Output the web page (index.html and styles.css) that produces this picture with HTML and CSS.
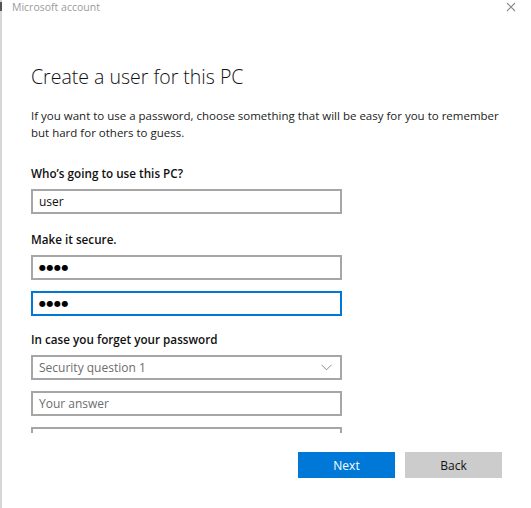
FILE: index.html
```html
<!DOCTYPE html>
<html>
<head>
<meta charset="utf-8">
<link rel="stylesheet" href="styles.css">
</head>
<body>
<div class="window">
  <div class="titlebar">
    <span class="app-name">Microsoft account</span>
    <svg class="close" width="10" height="10" viewBox="0 0 10 10"><path d="M1 1 L9 9 M9 1 L1 9" stroke="#8a8a8a" stroke-width="1.1" fill="none"/></svg>
  </div>
  <div class="content">
    <h1 class="title">Create a user for this PC</h1>
    <p class="intro">If you want to use a password, choose something that will be easy for you to remember<br>but hard for others to guess.</p>
    <div class="label first">Who’s going to use this PC?</div>
    <div class="field"><span class="value">user</span></div>
    <div class="label">Make it secure.</div>
    <div class="field"><span class="dots">●●●●</span></div>
    <div class="field focused"><span class="dots">●●●●</span></div>
    <div class="label security">In case you forget your password</div>
    <div class="field select"><span class="placeholder">Security question 1</span>
      <svg class="chevron" width="11" height="7" viewBox="0 0 11 7"><path d="M0.5 0.8 L5.5 5.8 L10.5 0.8" stroke="#8c8c8c" stroke-width="1" fill="none"/></svg>
    </div>
    <div class="field"><span class="placeholder">Your answer</span></div>
    <div class="field select"></div>
  </div>
  <div class="footer">
    <button class="btn primary">Next</button>
    <button class="btn secondary">Back</button>
  </div>
</div>
</body>
</html>
```
FILE: styles.css
```css
* { box-sizing: border-box; }
html, body {
  margin: 0;
  padding: 0;
  background: #fff;
}
body {
  width: 531px;
  height: 508px;
  overflow: hidden;
  font-family: "Open Sans", "Noto Sans", sans-serif;
  color: #1a1a1a;
}
.window {
  position: relative;
  width: 531px;
  height: 508px;
  border-left: 2px solid #d6d6d6;
  display: flex;
  flex-direction: column;
}
.window::before {
  content: "";
  position: absolute;
  left: -2px;
  top: 2px;
  width: 2px;
  height: 9px;
  background: #555;
}
.titlebar {
  height: 30px;
  flex: none;
  display: flex;
  justify-content: space-between;
  align-items: flex-start;
  padding: 0 15px 0 10px;
}
.app-name {
  font-size: 10.5px;
  line-height: 14px;
  color: #9b9b9b;
}
.close {
  margin-top: 2px;
}
.content {
  height: 403px;
  flex: none;
  overflow: hidden;
  padding: 33px 0 0 29px;
}
.title {
  margin: 0;
  font-size: 19.5px;
  font-weight: 300;
  line-height: 28px;
  color: #111;
}
.intro {
  margin: 16px 0 0;
  font-size: 11.5px;
  line-height: 17px;
  color: #222;
  white-space: nowrap;
}
.label {
  margin: 17px 0 8px;
  font-size: 11.7px;
  font-weight: 600;
  line-height: 16px;
  color: #111;
}
.label.first {
  margin-top: 24px;
}
.label.security {
  margin-top: 15px;
}
.field {
  width: 311px;
  height: 25px;
  border: 2px solid #a6a6a6;
  display: flex;
  align-items: center;
  justify-content: space-between;
  padding: 0 8px 0 6px;
  margin-bottom: 11px;
  font-size: 12px;
  background: #fff;
}
.field.focused {
  border-color: #0078d7;
}
.value {
  color: #111;
}
.dots {
  font-family: "DejaVu Sans", sans-serif;
  font-size: 8px;
  letter-spacing: 0.5px;
  color: #000;
}
.placeholder {
  color: #6d6d6d;
}
.footer {
  flex: 1;
  display: flex;
  justify-content: flex-end;
  align-items: flex-start;
  gap: 10px;
  padding: 19px 29px 0 0;
}
.btn {
  width: 97px;
  height: 26px;
  border: 1px solid transparent;
  font-family: "Open Sans", "Noto Sans", sans-serif;
  font-size: 12px;
  padding: 0;
}
.btn.primary {
  background: #0078d7;
  color: #fff;
}
.btn.secondary {
  background: #cccccc;
  color: #111;
}
```
